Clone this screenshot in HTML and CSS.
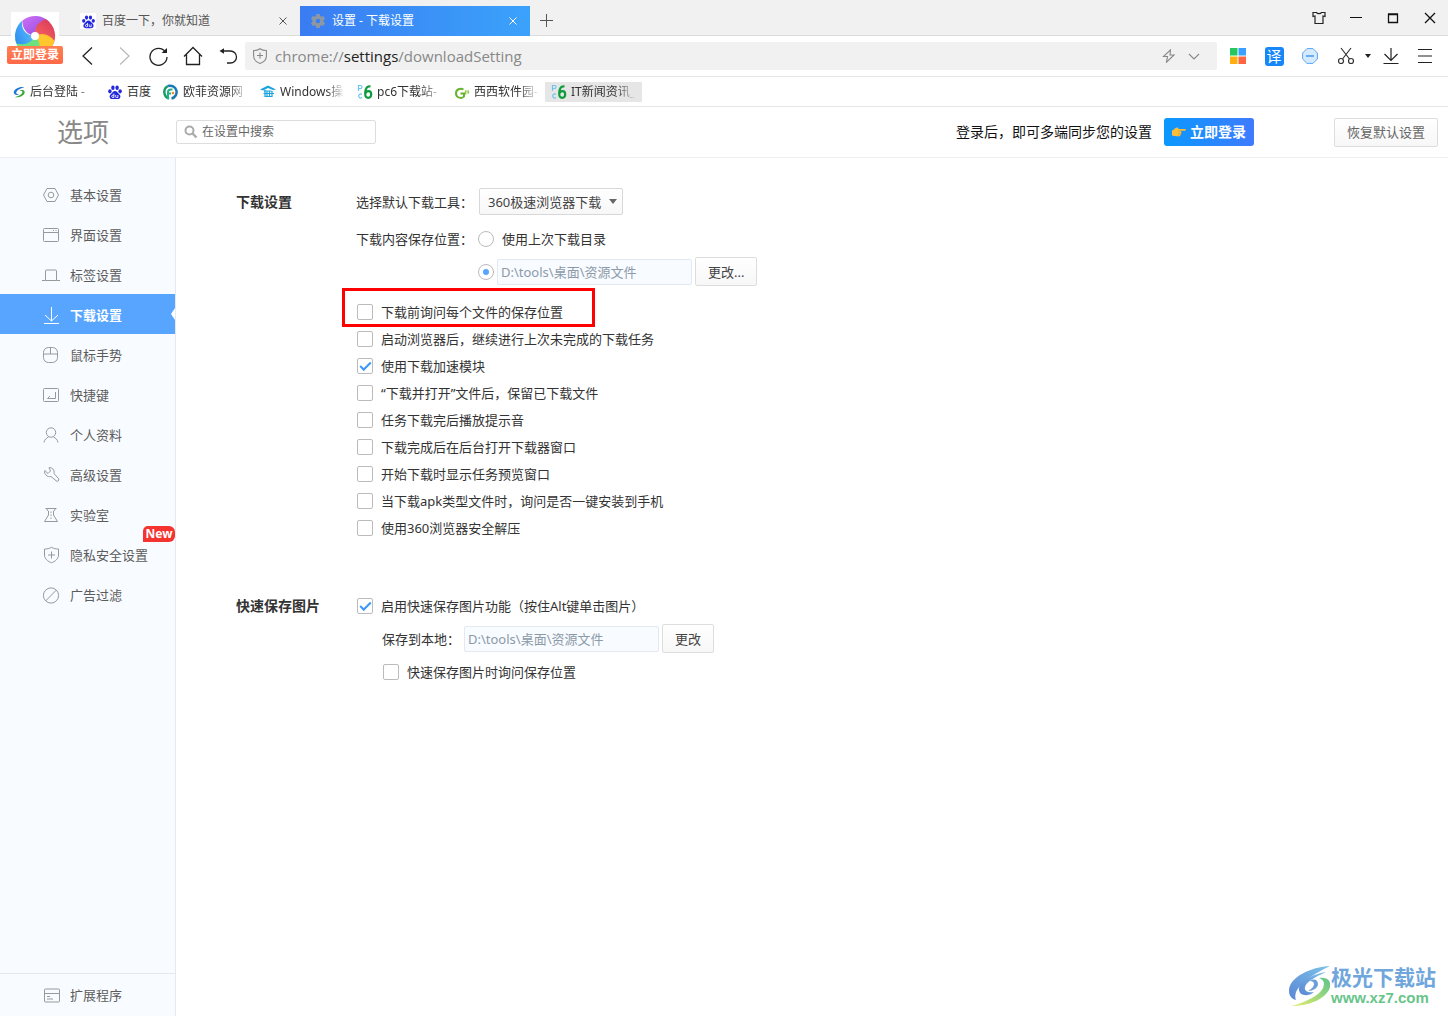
FILE: index.html
```html
<!DOCTYPE html>
<html lang="zh-CN">
<head>
<meta charset="utf-8">
<title>设置 - 下载设置</title>
<meta name="viewport" content="width=device-width, initial-scale=1">
<link rel="stylesheet" href="styles.css">
</head>
<body>
<svg class="defs" aria-hidden="true">
  <symbol id="paw" viewBox="0 0 16 16">
    <g fill="#2428dc">
      <ellipse cx="2.9" cy="7.3" rx="1.7" ry="2.1"/>
      <ellipse cx="5.9" cy="3.8" rx="1.7" ry="2.3"/>
      <ellipse cx="10.1" cy="3.8" rx="1.7" ry="2.3"/>
      <ellipse cx="13.1" cy="7.3" rx="1.7" ry="2.1"/>
      <path d="M8 6.900c-2 0-2.600 1.700-3.800 2.800-1.400 1.300-1.900 2.200-1.500 3.600.4 1.500 1.700 1.900 2.900 1.800h4.800c1.200.1 2.500-.3 2.900-1.800.4-1.400-.1-2.300-1.500-3.600C10.600 8.600 10 6.900 8 6.900z"/>
    </g>
    <path d="M6.900 9.600v3.900H5.700c-1.300 0-1.300-2.300 0-2.300h1M8.700 11v1.700c0 .5.200.8.800.8h1.400V11" fill="none" stroke="#fff" stroke-width=".9"/>
  </symbol>
  <symbol id="pc6" viewBox="0 0 16 16">
    <path d="M1.500 7V1.500h2a1.500 1.500 0 0 1 0 3h-2M5 10.500a2 2 0 1 0 0 3" fill="none" stroke="#6cc4ee" stroke-width="1.200"/>
    <path d="M13.500 2.500C10 1.500 8.200 5 8.200 9.500c0 2.500 1 4.300 3 4.300s3-1.600 3-3.400-1-3.200-2.700-3.200-3.100 1.300-3.200 2.800" fill="none" stroke="#0c9c3c" stroke-width="2.200"/>
  </symbol>
  <symbol id="close" viewBox="0 0 10 10"><path d="M1.500 1.500l7 7m0-7l-7 7" fill="none" stroke="currentColor" stroke-width="1"/></symbol>
</svg>

<header class="browser">
  <div class="tabstrip">
    <a class="tab" href="#baidu">
      <span class="tab-icon light"><svg width="15" height="15"><use href="#paw"/></svg></span>
      <span class="tab-title">百度一下，你就知道</span>
      <svg class="tab-close" width="10" height="10"><use href="#close"/></svg>
    </a>
    <a class="tab active" href="#settings">
      <span class="tab-icon"><svg width="16" height="16" viewBox="0 0 16 16"><path fill="#8e97a4" fill-rule="evenodd" d="M6.300 1h3.400l.4 2 1.300.7 1.900-.8L15 5.800l-1.500 1.400v1.600l1.500 1.400-1.700 2.900-1.900-.8-1.300.7-.4 2H6.300l-.4-2-1.300-.7-1.900.8L1 10.200l1.500-1.400V7.200L1 5.800l1.700-2.900 1.900.8 1.300-.7zM8 5.700a2.300 2.300 0 1 0 0 4.600 2.300 2.300 0 0 0 0-4.600z"/></svg></span>
      <span class="tab-title">设置 - 下载设置</span>
      <svg class="tab-close" width="10" height="10"><use href="#close"/></svg>
    </a>
    <button class="new-tab" aria-label="新建标签页"><svg width="14" height="14" viewBox="0 0 14 14"><path d="M6.500 0v13M0 6.500h13" stroke="#555" stroke-width="1"/></svg></button>
    <div class="window-controls">
      <button aria-label="皮肤"><svg width="16" height="16" viewBox="0 0 16 16"><path d="M2 2.500h3.500c.6 1.600 4.400 1.600 5 0H14v4l-2-.5v7.500H4V6l-2 .5z" fill="none" stroke="#222" stroke-width="1.200"/></svg></button>
      <button aria-label="最小化"><svg width="12" height="12" viewBox="0 0 12 12"><path d="M0 5.500h12" stroke="#111"/></svg></button>
      <button aria-label="最大化"><svg width="12" height="12" viewBox="0 0 12 12"><path d="M1.500 2.500h9v8h-9z M1 2h10" fill="none" stroke="#111" stroke-width="1.300"/></svg></button>
      <button aria-label="关闭"><svg width="12" height="12" viewBox="0 0 12 12"><path d="M1 1l10 10m0-10L1 11" stroke="#111" stroke-width="1.300"/></svg></button>
    </div>
  </div>

  <div class="toolbar">
    <button class="nav" aria-label="后退"><svg width="20" height="20" viewBox="0 0 20 20"><path d="M14 1.500L5 10l9 8.500" fill="none" stroke="#222" stroke-width="1.300"/></svg></button>
    <button class="nav" aria-label="前进"><svg width="20" height="20" viewBox="0 0 20 20"><path d="M7 1.500l9 8.500-9 8.500" fill="none" stroke="#bbb" stroke-width="1.300"/></svg></button>
    <button class="nav" aria-label="刷新"><svg width="20" height="20" viewBox="0 0 20 20"><path d="M17.500 6A8.500 8.500 0 1 0 19 11" fill="none" stroke="#222" stroke-width="1.300"/><path d="M19 2V7H13.500z" fill="#222"/></svg></button>
    <button class="nav" aria-label="主页"><svg width="20" height="20" viewBox="0 0 20 20"><path d="M1 10.500L10 1.500l9 9M3.500 8.500v10h13v-10" fill="none" stroke="#222" stroke-width="1.300"/></svg></button>
    <button class="nav" aria-label="恢复"><svg width="20" height="20" viewBox="0 0 20 20"><path d="M4 5h8.500a6 6 0 0 1 0 12H9" fill="none" stroke="#222" stroke-width="1.300"/><path d="M1.500 5L6 2.200v5.600z" fill="#222"/></svg></button>
    <div class="address">
      <svg width="16" height="16" viewBox="0 0 16 16"><path d="M8 .7C6 2.200 4 2.500 1.600 2.500V8c0 4 2.900 6.200 6.400 7.400 3.500-1.200 6.400-3.400 6.400-7.400V2.500C12 2.500 10 2.200 8 .7zM8 4.500v6M5 7.500h6" fill="none" stroke="#888" stroke-width="1.100"/></svg>
      <div class="url" role="textbox" aria-label="地址栏" contenteditable="true" spellcheck="false">chrome://<span class="host">settings</span>/downloadSetting</div>
      <svg width="14" height="14" viewBox="0 0 14 14"><path d="M8.500.8L1.500 7.500H5.500L4.500 13.200 12 6H8z" fill="none" stroke="#888" stroke-width="1.100"/></svg>
      <svg width="12" height="12" viewBox="0 0 12 12"><path d="M1 4l5 5 5-5" fill="none" stroke="#888" stroke-width="1.100"/></svg>
    </div>
    <div class="tools">
      <button class="tool" aria-label="应用"><svg width="16" height="16" viewBox="0 0 16 16"><path fill="#27c75f" d="M0 0h7.500v7.500H0z"/><path fill="#39a0ff" d="M8.500 0H16v7.500H8.500z"/><path fill="#ffb010" d="M0 8.500h7.500V16H0z"/><path fill="#ff6640" d="M8.500 8.500H16V16H8.500z"/></svg></button>
      <button class="tool"><span class="translate">译</span></button>
      <button class="tool" aria-label="广告拦截"><svg width="16" height="16" viewBox="0 0 16 16"><path d="M5 .6h6L15.400 5v6L11 15.400H5L.6 11V5z" fill="#d5e9ff" stroke="#5aa5f7"/><path d="M4 8h8" stroke="#4b9cf5" stroke-width="1.600"/></svg></button>
      <button class="tool wide" aria-label="截图"><svg width="18" height="18" viewBox="0 0 18 18"><g fill="none" stroke="#333" stroke-width="1.200"><circle cx="4" cy="14" r="2.500"/><circle cx="14" cy="14" r="2.500"/><path d="M4 1l8.500 11M14 1L5.500 12"/></g></svg><svg width="6" height="4" viewBox="0 0 6 4"><path d="M0 0h6L3 4z" fill="#222"/></svg></button>
      <button class="tool narrow" aria-label="下载"><svg width="16" height="18" viewBox="0 0 16 18"><path d="M8 1v12M1.500 7L8 13.500 14.500 7M.5 16.500h15" fill="none" stroke="#222" stroke-width="1.200"/></svg></button>
      <button class="tool narrow" aria-label="菜单"><svg width="14" height="14" viewBox="0 0 14 14"><path d="M0 .5h14M0 7h14M0 13.500h14" stroke="#222" stroke-width="1.200"/></svg></button>
    </div>
  </div>

  <nav class="bookmarks" aria-label="书签">
    <a href="#b1"><svg width="14" height="14" viewBox="0 0 16 16"><path d="M14 2.500C8 1.500 2 5 2 8.700c0 2.500 3.500 3.300 6.500 2-2.500 0-4.200-.8-3.600-2.400C5.700 6 9 4 14 2.500z" fill="#1f78d1"/><path d="M3 14c6 .8 11.500-2 11.500-6 0-2.300-3.200-2.800-6-1.800 2.300-.1 3.800.9 3.300 2.500C11.200 11 7.500 12.800 3 14z" fill="#38a93a"/></svg><span class="clip">后台登陆 -</span></a>
    <a href="#b2"><svg width="16" height="16"><use href="#paw"/></svg><span>百度</span></a>
    <a href="#b3"><svg width="16" height="16" viewBox="0 0 16 16"><g fill="none" stroke-width="2.500"><path d="M6 14.500A6.800 6.800 0 0 1 5 2" stroke="#1b9a6b"/><path d="M5 2a6.500 6.500 0 1 1 3.500 12.500" stroke="#1c79b7"/><path d="M5 15V8q0-2.500 3-2.500h1.500M5 9.500h3" stroke="#23b083" stroke-width="2"/></g><circle cx="10" cy="9" r="1.300" fill="#f28b1d"/></svg><span class="clip">欧菲资源网</span></a>
    <a href="#b4"><svg width="16" height="16" viewBox="0 0 16 16"><path d="M0 5.500L8 1.500l8 4-3 .5-5-2-5 2.500z" fill="#1aa3dd"/><path d="M4 7h7.500M3.500 9.500H14M5 6v6.500h7V7M7 12V7.500M9.500 7.500V12" fill="none" stroke="#1aa3dd" stroke-width="1.200"/></svg><span class="clip">Windows操</span></a>
    <a href="#b5"><svg width="16" height="16"><use href="#pc6"/></svg><span class="clip">pc6下载站-</span></a>
    <a href="#b6"><svg width="16" height="16" viewBox="0 0 16 16"><path d="M9.500 5.500C6 3.500 2 5.500 2 9.500c0 4.500 6 5.500 8 3V9.500H6.500" fill="none" stroke="#66b32e" stroke-width="2"/><path d="M11.500 10.500V7h3v2h-2" fill="none" stroke="#8dc63f" stroke-width="1.200"/></svg><span class="clip">西西软件园-</span></a>
    <a class="current" href="#b7"><svg width="16" height="16"><use href="#pc6"/></svg><span class="clip">IT新闻资讯_</span></a>
  </nav>

  <a class="login" href="#login">
    <span class="logo"><svg width="44" height="44" viewBox="0 0 44 44">
      <defs>
        <linearGradient id="lb" x1="0" y1="0" x2="1" y2="1"><stop offset="0" stop-color="#2788ee"/><stop offset="1" stop-color="#69c8ff"/></linearGradient>
        <linearGradient id="lp" x1="0" y1="0" x2="1" y2="1"><stop offset="0" stop-color="#d070f2"/><stop offset="1" stop-color="#8a48e8"/></linearGradient>
        <linearGradient id="lr" x1="0" y1="0" x2="1" y2="1"><stop offset="0" stop-color="#d93a5c"/><stop offset="1" stop-color="#ff705d"/></linearGradient>
      </defs>
      <path id="petal" d="M22 22Q10 20 9.200 6.700A20 20 0 0 1 37 8.500Q22 8 22 22z" fill="url(#lp)"/>
      <path d="M22 22Q10 20 9.200 6.700A20 20 0 0 1 37 8.500Q22 8 22 22z" fill="url(#lr)" transform="rotate(72 22 22)"/>
      <path d="M22 22Q10 20 9.200 6.700A20 20 0 0 1 37 8.500Q22 8 22 22z" fill="#ffc62e" transform="rotate(144 22 22)"/>
      <path d="M22 22Q10 20 9.200 6.700A20 20 0 0 1 37 8.500Q22 8 22 22z" fill="#6be27f" transform="rotate(216 22 22)"/>
      <path d="M22 22Q10 20 9.200 6.700A20 20 0 0 1 32.600 5Q19 8 22 22z" fill="url(#lb)" transform="rotate(288 22 22)"/>
      <circle cx="22" cy="22" r="4" fill="#fff"/>
    </svg></span>
    <span class="login-tag">立即登录</span>
  </a>
</header>

<div class="page-head">
  <h1>选项</h1>
  <label class="search">
    <svg width="14" height="14" viewBox="0 0 14 14"><circle cx="5.500" cy="5.500" r="4" fill="none" stroke="#aaa" stroke-width="2"/><path d="M8.500 8.500l4 4" stroke="#aaa" stroke-width="2.400"/></svg>
    <input type="text" placeholder="在设置中搜索" aria-label="在设置中搜索">
  </label>
  <p class="sync">登录后，即可多端同步您的设置</p>
  <button class="sign-in"><svg width="14" height="10" viewBox="0 0 14 10"><path d="M0 3.500C1.500 3 3 1 5 .5c1.500 0 1.800 1 1.300 1.600h6.700c1.200 0 1.200 1.700 0 1.700H9v1c.8.5.6 1.400 0 1.600.3.700 0 1.300-.6 1.500 0 .9-.4 1.300-1.200 1.300-2.700.2-5.200 0-7.200-.6z" fill="#fdbf3b"/><path d="M6 3.800h3M6.500 6.300h2.300M6 7.900h2" stroke="#d98d16" stroke-width=".6"/></svg>立即登录</button>
  <button class="btn reset">恢复默认设置</button>
</div>

<div class="body">
  <aside class="sidebar">
    <nav class="menu" aria-label="设置">
      <a href="#basic"><svg viewBox="0 0 18 18"><path d="M5 2.500h8L16.500 9 13 15.500H5L1.500 9z"/><circle cx="9" cy="9" r="2.800"/></svg>基本设置</a>
      <a href="#ui"><svg viewBox="0 0 18 18"><rect x="1.500" y="2.500" width="15" height="13" rx="1"/><path d="M1.500 6.500h15M11 4.500h1M13.500 4.500h1"/></svg>界面设置</a>
      <a href="#tabs"><svg viewBox="0 0 18 18"><path d="M0 14.500h3.500V5q0-1 1-1h9q1 0 1 1v9.500H18M3.500 14.500h11"/></svg>标签设置</a>
      <a class="active" href="#download" aria-current="page"><svg viewBox="0 0 18 18"><path d="M9.500 1v14M3 9l6.500 6L16 9M2 17.500h15"/></svg>下载设置</a>
      <a href="#mouse"><svg viewBox="0 0 18 18"><rect x="1.500" y="1.500" width="14" height="15" rx="5"/><path d="M1.500 8h14M8.500 1.500V8"/></svg>鼠标手势</a>
      <a href="#keys"><svg viewBox="0 0 18 18"><rect x="1.500" y="2.500" width="15" height="13" rx="1"/><path d="M13.500 6v6.500h-8M8 10l-2.500 2.500"/></svg>快捷键</a>
      <a href="#profile"><svg viewBox="0 0 18 18"><circle cx="9" cy="6.500" r="4.700"/><path d="M2 16.500c.5-3 2.500-4.500 4.500-5.500M16 16.500c-.5-3-2.500-4.500-4.500-5.500"/></svg>个人资料</a>
      <a href="#advanced"><svg viewBox="0 0 18 18"><path d="M7 1.700C10 1.200 13 4 12 7.500l4.700 5.300c.8 1.800-1.300 3.200-2.600 2L9 10.500C5.500 11.500 1.500 8 2.800 4.500L6 7.500 8.500 5z"/></svg>高级设置</a>
      <a href="#lab"><svg viewBox="0 0 18 18"><path d="M3.500 2.500h11M5 2.500v1.500l1.500 1V9L2.500 15.500h13L11.500 9V5L13 4V2.500"/><path d="M9 5.500v8" stroke-dasharray="1.500 1.500"/></svg>实验室</a>
      <a href="#privacy"><svg viewBox="0 0 18 18"><path d="M9.500 1.200C7.500 2.700 5 3 2.500 3v6c0 4 3.500 6.500 7 7.800 3.500-1.300 7-3.800 7-7.800V3C14 3 11.500 2.700 9.500 1.200zM9.500 5.500v7M6 9h7"/></svg>隐私安全设置<span class="badge">New</span></a>
      <a href="#ads"><svg viewBox="0 0 18 18"><circle cx="9" cy="9.500" r="7.600"/><path d="M3.800 14.800L14.200 4.200"/></svg>广告过滤</a>
    </nav>
    <nav class="menu extra" aria-label="扩展">
      <a href="#extensions"><svg viewBox="0 0 18 18"><rect x="2.500" y="3" width="15" height="13" rx="1"/><path d="M2.500 7.500h15M5 10.500h3M5 13h6"/></svg>扩展程序</a>
    </nav>
  </aside>

  <main class="content">
    <section class="group">
      <h2>下载设置</h2>
      <div class="fields">
        <div class="row">
          <label for="downloader">选择默认下载工具：</label>
          <span class="select"><select id="downloader"><option>360极速浏览器下载</option></select></span>
        </div>
        <div class="row">
          <span class="caption">下载内容保存位置：</span>
          <input type="radio" name="dir" id="dir-last"><label class="radio-text" for="dir-last">使用上次下载目录</label>
        </div>
        <div class="row path-row indent-radio">
          <input type="radio" name="dir" aria-label="使用指定目录" checked>
          <input class="path" type="text" value="D:\tools\桌面\资源文件" aria-label="下载目录" readonly>
          <button class="btn">更改...</button>
        </div>
        <div class="checks">
          <label class="check marked"><input type="checkbox">下载前询问每个文件的保存位置</label>
          <label class="check"><input type="checkbox">启动浏览器后，继续进行上次未完成的下载任务</label>
          <label class="check"><input type="checkbox" checked>使用下载加速模块</label>
          <label class="check"><input type="checkbox">“下载并打开”文件后，保留已下载文件</label>
          <label class="check"><input type="checkbox">任务下载完后播放提示音</label>
          <label class="check"><input type="checkbox">下载完成后在后台打开下载器窗口</label>
          <label class="check"><input type="checkbox">开始下载时显示任务预览窗口</label>
          <label class="check"><input type="checkbox">当下载apk类型文件时，询问是否一键安装到手机</label>
          <label class="check"><input type="checkbox">使用360浏览器安全解压</label>
        </div>
      </div>
    </section>

    <section class="group">
      <h2>快速保存图片</h2>
      <div class="fields">
        <label class="check"><input type="checkbox" checked>启用快速保存图片功能（按住Alt键单击图片）</label>
        <div class="row path-row nested">
          <label class="local" for="local">保存到本地：</label>
          <input class="path" id="local" type="text" value="D:\tools\桌面\资源文件" readonly>
          <button class="btn">更改</button>
        </div>
        <label class="check nested"><input type="checkbox">快速保存图片时询问保存位置</label>
      </div>
    </section>
  </main>
</div>

<div class="watermark">
  <svg width="42" height="42" viewBox="0 0 42 42">
    <defs>
      <linearGradient id="wb" x1="0" y1="1" x2="1" y2="0"><stop offset="0" stop-color="#5b86d4"/><stop offset="1" stop-color="#7cc4ea"/></linearGradient>
      <linearGradient id="wg" x1="0" y1="1" x2="1" y2="0"><stop offset="0" stop-color="#e4ee6a"/><stop offset="1" stop-color="#5cc48c"/></linearGradient>
    </defs>
    <path d="M41 1C22 2 0 12 0 26c0 5 3 8 7 9-3-8 3-19 34-34z" fill="url(#wb)"/>
    <path d="M37 7C20 10 9 18 10 25c1 6 9 7 15 2-6 1-10-1-9-5 1-5 10-10 21-15z" fill="url(#wb)"/>
    <path d="M21 16c4-3 8-1 8 3 0 4-5 7-10 7 3-2 6-4 6-7 0-2-2-3-4-3z" fill="#6b9edb"/>
    <path d="M30 13c9-1 12 3 11 9-2 9-17 19-38 19 13-4 27-10 31-18 2-5 1-8-4-10z" fill="url(#wg)"/>
  </svg>
  <div class="wm-text"><span class="wm-name">极光下载站</span><span class="wm-url">www.xz7.com</span></div>
</div>
</body>
</html>
```
FILE: styles.css
```css
*, *::before, *::after {
  box-sizing: border-box;
}

body {
  margin: 0;
  min-height: 100vh;
  display: flex;
  flex-direction: column;
  position: relative;
  background: #fff;
  color: #333;
  font-family: "Noto Sans", "Noto Sans CJK SC", sans-serif;
  font-size: 13px;
  line-height: 20px;
}

h1, h2, p {
  margin: 0;
}

a {
  color: inherit;
  text-decoration: none;
}

button, input, select {
  margin: 0;
  font: inherit;
  color: inherit;
}

button {
  padding: 0;
  border: 0;
  background: none;
}

svg {
  display: block;
  flex: none;
}

.defs {
  position: absolute;
  width: 0;
  height: 0;
}

/* Browser frame */
.browser {
  position: relative;
}

.tabstrip {
  display: flex;
  align-items: flex-end;
  height: 36px;
  padding-left: 70px;
  background: #f1f1f1;
  box-shadow: inset 0 -1px #dcdcdc;
}

.tab {
  display: flex;
  align-items: center;
  width: 230px;
  height: 30px;
  padding: 0 12px 0 10px;
  color: #555;
  font-size: 12px;
}

.tab.active {
  background: linear-gradient(90deg, #3a7cf2, #3ba2fb);
  color: #fff;
}

.tab-icon {
  display: grid;
  place-items: center;
  width: 16px;
  height: 16px;
  margin-right: 6px;
}

.tab-icon.light {
  background: #fff;
}

.tab-title {
  flex: 1;
}

.new-tab {
  display: grid;
  place-items: center;
  width: 33px;
  height: 30px;
}

.window-controls {
  display: flex;
  align-self: flex-start;
  margin-left: auto;
}

.window-controls button {
  display: grid;
  place-items: center;
  width: 37px;
  height: 36px;
}

.toolbar {
  display: flex;
  align-items: center;
  height: 41px;
  padding: 0 6px 0 70px;
  border-bottom: 1px solid #e6e6e6;
}

.nav {
  display: grid;
  place-items: center;
  width: 35px;
  height: 40px;
}

.address {
  flex: 1;
  display: flex;
  align-items: center;
  gap: 12px;
  height: 28px;
  padding: 0 17px 0 7px;
  border-radius: 2px;
  background: #f1f1f1;
}

.url {
  flex: 1;
  margin-left: -5px;
  color: #888;
  font-family: "Open Sans", "Noto Sans", sans-serif;
  font-size: 15px;
  outline: 0;
}

.host {
  color: #222;
}

.tools {
  display: flex;
  margin-left: 3px;
}

.tool {
  display: flex;
  align-items: center;
  justify-content: center;
  gap: 10px;
  width: 36px;
  height: 40px;
}

.tool.wide {
  width: 46px;
  padding-left: 6px;
}

.tool.narrow {
  width: 34px;
}

.translate {
  width: 19px;
  border-radius: 3px;
  background: #1687f8;
  color: #fff;
  font-size: 15px;
  line-height: 19px;
}

.bookmarks {
  display: flex;
  align-items: center;
  height: 30px;
  padding-left: 6px;
  border-bottom: 1px solid #e6e6e6;
  font-size: 12px;
}

.bookmarks a {
  display: flex;
  align-items: center;
  gap: 4px;
  height: 20px;
  padding: 0 6px;
}

.bookmarks .current {
  background: #e6e6e6;
}

.clip {
  width: 65px;
  overflow: hidden;
  white-space: nowrap;
  -webkit-mask-image: linear-gradient(90deg, #000 70%, transparent);
  mask-image: linear-gradient(90deg, #000 70%, transparent);
}

.login {
  position: absolute;
  top: 12px;
  left: 7px;
  width: 56px;
  display: flex;
  flex-direction: column;
  align-items: center;
}

.logo {
  display: flex;
  justify-content: center;
  width: 48px;
  height: 34px;
  padding-top: 2px;
  overflow: hidden;
  background: #fff;
}

.login-tag {
  width: 56px;
  border-radius: 2px;
  background: linear-gradient(#ff8050, #ff6848);
  color: #fff;
  font-size: 12px;
  font-weight: 700;
  line-height: 18px;
  text-align: center;
}

/* Settings header */
.page-head {
  display: flex;
  align-items: center;
  height: 51px;
  padding-right: 10px;
  border-bottom: 1px solid #eceff2;
}

h1 {
  width: 176px;
  padding-left: 57px;
  color: #888;
  font-size: 26px;
  font-weight: 400;
  line-height: 36px;
}

.search {
  display: flex;
  align-items: center;
  gap: 4px;
  width: 200px;
  height: 24px;
  padding: 0 7px;
  border: 1px solid #ddd;
  border-radius: 2px;
}

.search input {
  flex: 1;
  min-width: 0;
  padding: 0;
  border: 0;
  outline: 0;
  font-size: 12px;
}

.search input::placeholder {
  color: #666;
}

.sync {
  margin-left: auto;
  color: #111;
  font-size: 14px;
}

.sign-in {
  display: flex;
  align-items: center;
  justify-content: center;
  gap: 4px;
  width: 90px;
  height: 28px;
  margin: 0 80px 0 12px;
  border-radius: 3px;
  background: linear-gradient(90deg, #0a98ff, #3f7bff);
  color: #fff;
  font-size: 14px;
  font-weight: 700;
}

.btn {
  height: 29px;
  padding: 0 12px;
  border: 1px solid #ddd;
  border-radius: 2px;
  background: linear-gradient(#fff, #f7f7f7);
  color: #444;
}

.btn.reset {
  width: 104px;
  color: #666;
}

/* Sidebar */
.body {
  flex: 1;
  display: flex;
}

.sidebar {
  display: flex;
  flex-direction: column;
  width: 176px;
  padding-top: 16px;
  border-right: 1px solid #e4e9ef;
  background: #f8fbff;
}

.menu a {
  position: relative;
  display: flex;
  align-items: center;
  gap: 10px;
  height: 40px;
  padding: 2px 0 0 42px;
  color: #5c5c5c;
}

.menu svg {
  width: 18px;
  height: 18px;
  fill: none;
  stroke: #999;
  stroke-width: 1px;
}

.menu .active {
  background: #57a5ff;
  color: #fff;
  font-weight: 700;
}

.menu .active svg {
  stroke: #fff;
}

.menu .active::after {
  content: "";
  position: absolute;
  right: 0;
  top: 14px;
  border: solid transparent;
  border-width: 6px 4px 6px 0;
  border-right-color: #fff;
}

.badge {
  position: absolute;
  top: -8px;
  right: 0;
  width: 32px;
  border-radius: 5px 6px 6px 0;
  background: #f5332f;
  color: #fff;
  font-size: 12px;
  font-weight: 700;
  line-height: 16px;
  text-align: center;
}

.menu.extra {
  margin-top: auto;
  border-top: 1px solid #e4e9ef;
  padding-bottom: 2px;
}

/* Settings content */
.content {
  flex: 1;
  padding: 30px 20px 30px 60px;
}

.group {
  display: flex;
  margin-bottom: 51px;
}

h2 {
  width: 120px;
  font-size: 14px;
  font-weight: 700;
  line-height: 27px;
}

.row {
  display: flex;
  align-items: center;
  height: 27px;
  margin-bottom: 10px;
}

.row > label:first-child {
  width: 123px;
}

.caption {
  width: 122px;
}

.row .local:first-child {
  width: 82px;
}

.row:nth-child(2) {
  margin-bottom: 5px;
}

.radio-text {
  margin-left: 8px;
}

.path-row, .group .path-row {
  height: 29px;
  margin-bottom: 12px;
}

.indent-radio {
  padding-left: 122px;
}

.select {
  position: relative;
}

.select::after {
  content: "";
  position: absolute;
  top: 11px;
  right: 6px;
  border: solid transparent;
  border-width: 5px 4px 0;
  border-top-color: #666;
  pointer-events: none;
}

.select select {
  display: block;
  width: 144px;
  height: 27px;
  padding: 0 8px;
  appearance: none;
  border: 1px solid #d8d8d8;
  border-radius: 2px;
  background: linear-gradient(#fff, #f7f7f7);
  color: #444;
}

input[type="radio"], input[type="checkbox"] {
  flex: none;
  width: 16px;
  height: 16px;
  appearance: none;
  border: 1px solid #bbb;
  background: #fff;
}

input[type="radio"] {
  display: grid;
  place-items: center;
  border-radius: 50%;
}

input[type="radio"]:checked::before {
  content: "";
  width: 6px;
  height: 6px;
  border-radius: 50%;
  background: #57a5ff;
}

input[type="checkbox"] {
  border-radius: 2px;
}

input[type="checkbox"]:checked::before {
  content: "";
  display: block;
  width: 11px;
  height: 6px;
  margin: 3px 2px;
  border: solid #3d97f7;
  border-width: 0 0 2px 2px;
  transform: rotate(-45deg);
}

.path {
  width: 195px;
  height: 26px;
  margin: 0 3px;
  padding: 0 3px;
  border: 1px solid #e2e9f2;
  border-radius: 2px;
  background: #f8fbff;
  color: #8c9aa8;
}

.local + .path {
  margin-left: 0;
}

.check {
  position: relative;
  display: flex;
  align-items: center;
  gap: 8px;
  height: 27px;
  padding-left: 1px;
}

.marked::after {
  content: "";
  position: absolute;
  top: -10px;
  left: -14px;
  width: 253px;
  height: 39px;
  border: 3px solid #f00;
}

.group .nested {
  margin: 5px 0;
  padding-left: 27px;
}

.group .path-row.nested {
  padding-left: 26px;
}

/* Site mark in the page corner */
.watermark {
  position: absolute;
  right: 12px;
  bottom: 9px;
  display: flex;
  align-items: center;
}

.wm-text {
  display: flex;
  flex-direction: column;
}

.wm-name {
  color: #6fa6dc;
  font-size: 21px;
  font-weight: 700;
  line-height: 24px;
}

.wm-url {
  color: #68c58a;
  font-family: "Liberation Sans", sans-serif;
  font-size: 15px;
  font-weight: 700;
  line-height: 18px;
}
```
